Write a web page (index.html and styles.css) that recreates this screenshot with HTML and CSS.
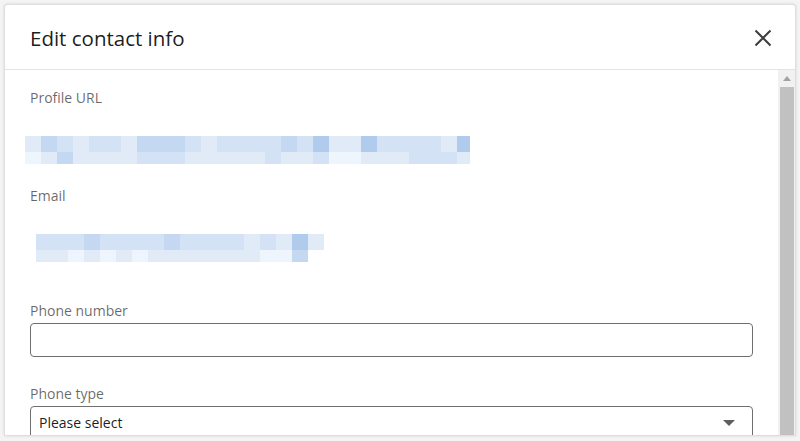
FILE: index.html
```html
<!DOCTYPE html>
<html lang="en">
<head>
<meta charset="utf-8">
<title>Edit contact info</title>
<link rel="stylesheet" href="styles.css">
</head>
<body>
<div class="modal">
  <header class="modal-header">
    <h2 class="modal-title">Edit contact info</h2>
    <button class="close" aria-label="Dismiss">
      <svg width="18" height="18" viewBox="0 0 18 18"><path d="M1.5 1.5 L16.5 16.5 M16.5 1.5 L1.5 16.5" stroke="#3d3d3d" stroke-width="2" fill="none"/></svg>
    </button>
  </header>
  <div class="modal-main">
    <div class="modal-body">
      <div class="label label-first">Profile URL</div>
      <div class="mosaic mosaic-url">
        <div class="row row-a">
          <i class="t2"></i><i class="t4"></i><i class="t3"></i><i class="t2"></i><i class="t3"></i><i class="t3"></i><i class="t2"></i><i class="t4"></i><i class="t4"></i><i class="t4"></i><i class="t3"></i><i class="t2"></i><i class="t3"></i><i class="t3"></i><i class="t3"></i><i class="t3"></i><i class="t4"></i><i class="t3"></i><i class="t5"></i><i class="t2"></i><i class="t2"></i><i class="t5"></i><i class="t3"></i><i class="t3"></i><i class="t3"></i><i class="t3"></i><i class="t2"></i><i class="t5 last"></i>
        </div>
        <div class="row row-b">
          <i class="t1"></i><i class="t2"></i><i class="t4"></i><i class="t2"></i><i class="t2"></i><i class="t2"></i><i class="t2"></i><i class="t3"></i><i class="t3"></i><i class="t3"></i><i class="t2"></i><i class="t2"></i><i class="t2"></i><i class="t2"></i><i class="t2"></i><i class="t3"></i><i class="t2"></i><i class="t2"></i><i class="t3"></i><i class="t1"></i><i class="t1"></i><i class="t2"></i><i class="t2"></i><i class="t2"></i><i class="t3"></i><i class="t3"></i><i class="t3"></i><i class="t2 last"></i>
        </div>
      </div>
      <div class="label label-email">Email</div>
      <div class="mosaic mosaic-email">
        <div class="row row-a">
          <i class="t3"></i><i class="t3"></i><i class="t3"></i><i class="t4"></i><i class="t3"></i><i class="t3"></i><i class="t3"></i><i class="t3"></i><i class="t4"></i><i class="t3"></i><i class="t3"></i><i class="t3"></i><i class="t3"></i><i class="t2"></i><i class="t3"></i><i class="t2"></i><i class="t5"></i><i class="t2"></i>
        </div>
        <div class="row row-b">
          <i class="t2"></i><i class="t2"></i><i class="t1"></i><i class="t2"></i><i class="t1"></i><i class="t2"></i><i class="t1"></i><i class="t2"></i><i class="t2"></i><i class="t2"></i><i class="t2"></i><i class="t2"></i><i class="t2"></i><i class="t2"></i><i class="t1"></i><i class="t1"></i><i class="t4"></i>
        </div>
      </div>
      <label class="label label-phone" for="phone">Phone number</label>
      <input class="text-input" id="phone" type="text">
      <div class="label label-type">Phone type</div>
      <div class="select">
        <span>Please select</span>
        <svg width="12" height="6" viewBox="0 0 12 6"><path d="M0 0 H12 L6 6 Z" fill="#5e5e5e"/></svg>
      </div>
    </div>
    <div class="scrollbar">
      <div class="sb-arrow"><svg width="8" height="5" viewBox="0 0 8 5"><path d="M0 5 L4 0 L8 5 Z" fill="#a3a3a3"/></svg></div>
      <div class="sb-thumb"></div>
    </div>
  </div>
</div>
</body>
</html>
```
FILE: styles.css
```css
* { box-sizing: border-box; }
html, body { margin: 0; padding: 0; }
body {
  width: 800px;
  height: 441px;
  background: #f4f4f4;
  font-family: "Open Sans", "Noto Sans", Arial, sans-serif;
  overflow: hidden;
}
.modal {
  margin: 4px 0 0 4px;
  width: 792px;
  height: 432px;
  background: #fff;
  border: 1px solid #dedede;
  border-radius: 3px 3px 0 0;
  box-shadow: 0 0 3px rgba(0,0,0,0.12);
  display: flex;
  flex-direction: column;
  overflow: hidden;
}
.modal-header {
  height: 65px;
  flex: none;
  border-bottom: 1px solid #e4e4e4;
  display: flex;
  align-items: center;
  justify-content: space-between;
  padding: 1px 23px 0 25px;
}
.modal-title {
  margin: 0;
  font-size: 20.5px;
  line-height: 28px;
  font-weight: 400;
  color: rgba(0,0,0,0.9);
}
.close {
  border: 0;
  background: none;
  padding: 0;
  width: 18px;
  height: 18px;
  display: flex;
}
.modal-main {
  flex: 1;
  display: flex;
  min-height: 0;
}
.modal-body {
  flex: 1;
  padding: 18px 25px 0 25px;
  display: flex;
  flex-direction: column;
  overflow: hidden;
}
.label {
  display: block;
  font-size: 14px;
  line-height: 20px;
  color: rgba(0,0,0,0.6);
  flex: none;
}
.label-email { margin-top: 22px; }
.label-phone { margin-top: 39px; }
.label-type { margin-top: 27px; }
.mosaic { margin-top: 28px; flex: none; }
.mosaic-url { margin-left: -5px; }
.mosaic-email { margin-left: 6px; }
.row { display: flex; }
.row i { display: block; width: 16px; flex: none; }
.row i.last { width: 13px; }
.row-a i { height: 16px; }
.row-b i { height: 12px; }
.t1 { background: #eff5fc; }
.t2 { background: #e1ebf8; }
.t3 { background: #d3e2f5; }
.t4 { background: #c4d9f1; }
.t5 { background: #b1cbec; }
.text-input {
  margin-top: 2px;
  height: 34px;
  width: 100%;
  border: 1px solid #6f6f6f;
  border-radius: 4px;
  flex: none;
  font: inherit;
}
.select {
  margin-top: 2px;
  height: 34px;
  width: 100%;
  flex: none;
  border: 1px solid #6f6f6f;
  border-radius: 4px;
  padding: 0 17px 0 8px;
  display: flex;
  align-items: center;
  justify-content: space-between;
  font-size: 14px;
  line-height: 20px;
  color: rgba(0,0,0,0.9);
}
.scrollbar {
  width: 17px;
  flex: none;
  background: #f1f1f1;
  display: flex;
  flex-direction: column;
  align-items: center;
  padding: 0 1px 0 2px;
}
.sb-arrow {
  height: 17px;
  display: flex;
  align-items: center;
  justify-content: center;
  width: 100%;
}
.sb-thumb {
  flex: 1;
  width: 100%;
  background: #c1c1c1;
}
```
